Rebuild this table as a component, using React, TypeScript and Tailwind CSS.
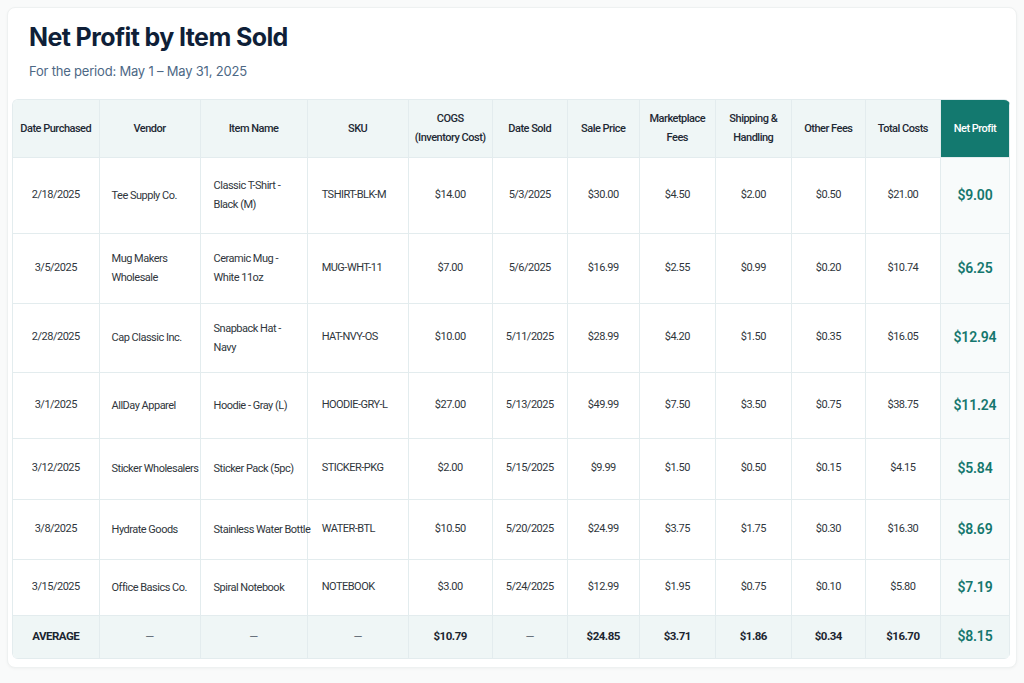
import React from 'react';

interface Sale {
    purchased: string;
    vendor: string[];
    item: string[];
    sku: string;
    cogs: string;
    sold: string;
    price: string;
    market: string;
    shipping: string;
    other: string;
    total: string;
    profit: string;
    h: string;
}

const rows: Sale[] = [
    { purchased: '2/18/2025', vendor: ['Tee Supply Co.'], item: ['Classic T-Shirt -', 'Black (M)'], sku: 'TSHIRT-BLK-M', cogs: '$14.00', sold: '5/3/2025', price: '$30.00', market: '$4.50', shipping: '$2.00', other: '$0.50', total: '$21.00', profit: '$9.00', h: 'h-[76px]' },
    { purchased: '3/5/2025', vendor: ['Mug Makers', 'Wholesale'], item: ['Ceramic Mug -', 'White 11oz'], sku: 'MUG-WHT-11', cogs: '$7.00', sold: '5/6/2025', price: '$16.99', market: '$2.55', shipping: '$0.99', other: '$0.20', total: '$10.74', profit: '$6.25', h: 'h-[70px]' },
    { purchased: '2/28/2025', vendor: ['Cap Classic Inc.'], item: ['Snapback Hat -', 'Navy'], sku: 'HAT-NVY-OS', cogs: '$10.00', sold: '5/11/2025', price: '$28.99', market: '$4.20', shipping: '$1.50', other: '$0.35', total: '$16.05', profit: '$12.94', h: 'h-[69px]' },
    { purchased: '3/1/2025', vendor: ['AllDay Apparel'], item: ['Hoodie - Gray (L)'], sku: 'HOODIE-GRY-L', cogs: '$27.00', sold: '5/13/2025', price: '$49.99', market: '$7.50', shipping: '$3.50', other: '$0.75', total: '$38.75', profit: '$11.24', h: 'h-[66px]' },
    { purchased: '3/12/2025', vendor: ['Sticker Wholesalers'], item: ['Sticker Pack (5pc)'], sku: 'STICKER-PKG', cogs: '$2.00', sold: '5/15/2025', price: '$9.99', market: '$1.50', shipping: '$0.50', other: '$0.15', total: '$4.15', profit: '$5.84', h: 'h-[61px]' },
    { purchased: '3/8/2025', vendor: ['Hydrate Goods'], item: ['Stainless Water Bottle'], sku: 'WATER-BTL', cogs: '$10.50', sold: '5/20/2025', price: '$24.99', market: '$3.75', shipping: '$1.75', other: '$0.30', total: '$16.30', profit: '$8.69', h: 'h-[60px]' },
    { purchased: '3/15/2025', vendor: ['Office Basics Co.'], item: ['Spiral Notebook'], sku: 'NOTEBOOK', cogs: '$3.00', sold: '5/24/2025', price: '$12.99', market: '$1.95', shipping: '$0.75', other: '$0.10', total: '$5.80', profit: '$7.19', h: 'h-[56px]' },
];

const headers: { label: string[]; w: string }[] = [
    { label: ['Date Purchased'], w: 'w-[86px]' },
    { label: ['Vendor'], w: 'w-[101px]' },
    { label: ['Item Name'], w: 'w-[107px]' },
    { label: ['SKU'], w: 'w-[101px]' },
    { label: ['COGS', '(Inventory Cost)'], w: 'w-[84px]' },
    { label: ['Date Sold'], w: 'w-[75px]' },
    { label: ['Sale Price'], w: 'w-[72px]' },
    { label: ['Marketplace', 'Fees'], w: 'w-[76px]' },
    { label: ['Shipping &', 'Handling'], w: 'w-[76px]' },
    { label: ['Other Fees'], w: 'w-[74px]' },
    { label: ['Total Costs'], w: 'w-[75px]' },
    { label: ['Net Profit'], w: 'w-[69px]' },
];

const Lines = ({ lines }: { lines: string[] }) => (
    <>
        {lines.map((l, i) => (
            <div key={i}>{l}</div>
        ))}
    </>
);

const cell = 'border-r border-b border-[#e3ecee] align-middle';
const dash = `${cell} text-center font-normal text-[#5b6570]`;

export default function App() {
    return (
        <div className="min-h-screen bg-[#f9fafa] p-[7px] font-['Roboto',sans-serif]">
            <div className="w-[1010px] h-[661px] bg-white rounded-lg border border-[#eef1f1] shadow-[0_1px_3px_rgba(0,0,0,0.04)] pt-[13px] px-[4px]">
                {/* Title */}
                <div className="pl-[17px]">
                    <h1 className="font-['Inter',sans-serif] text-[25px] leading-[32px] font-bold tracking-[-0.6px] text-[#0f1f38]">
                        Net Profit by Item Sold
                    </h1>
                    <p className="mt-[8px] font-['Inter',sans-serif] text-[13px] leading-[20px] tracking-[-0.2px] text-[#4d6885]">
                        For the period: May 1 – May 31, 2025
                    </p>
                </div>

                {/* Table */}
                <div className="mt-[18px] w-[998px] rounded-md border-l border-t border-[#e3ecee] overflow-hidden">
                    <table className="w-full table-fixed border-collapse text-[11px] tracking-[-0.5px] text-[#30363c]">
                        <colgroup>
                            {headers.map((h, i) => (
                                <col key={i} className={h.w} />
                            ))}
                        </colgroup>
                        <thead>
                            <tr className="h-[57px]">
                                {headers.map((h, i) => (
                                    <th
                                        key={i}
                                        className={`${cell} text-center font-medium leading-[19px] ${i === headers.length - 1
                                            ? 'bg-[#13796f] text-white border-[#13796f]'
                                            : 'bg-[#eff6f6] text-[#1f2a35]'
                                            }`}
                                    >
                                        <Lines lines={h.label} />
                                    </th>
                                ))}
                            </tr>
                        </thead>
                        <tbody>
                            {rows.map((r) => (
                                <tr key={r.sku} className={r.h}>
                                    <td className={`${cell} text-center`}>{r.purchased}</td>
                                    <td className={`${cell} pl-[12px] leading-[19px] whitespace-nowrap`}>
                                        <Lines lines={r.vendor} />
                                    </td>
                                    <td className={`${cell} pl-[13px] leading-[19px] whitespace-nowrap`}>
                                        <Lines lines={r.item} />
                                    </td>
                                    <td className={`${cell} pl-[14px]`}>{r.sku}</td>
                                    <td className={`${cell} text-center`}>{r.cogs}</td>
                                    <td className={`${cell} text-center`}>{r.sold}</td>
                                    <td className={`${cell} text-center`}>{r.price}</td>
                                    <td className={`${cell} text-center`}>{r.market}</td>
                                    <td className={`${cell} text-center`}>{r.shipping}</td>
                                    <td className={`${cell} text-center`}>{r.other}</td>
                                    <td className={`${cell} text-center`}>{r.total}</td>
                                    <td className={`${cell} text-center bg-[#f8fbfb] text-[14px] font-semibold tracking-[-0.2px] text-[#15776e]`}>
                                        {r.profit}
                                    </td>
                                </tr>
                            ))}
                            <tr className="h-[43px] bg-[#eff6f6] font-bold text-[11.5px] text-[#1b2530]">
                                <td className={`${cell} text-center`}>AVERAGE</td>
                                <td className={dash}>—</td>
                                <td className={dash}>—</td>
                                <td className={dash}>—</td>
                                <td className={`${cell} text-center`}>$10.79</td>
                                <td className={dash}>—</td>
                                <td className={`${cell} text-center`}>$24.85</td>
                                <td className={`${cell} text-center`}>$3.71</td>
                                <td className={`${cell} text-center`}>$1.86</td>
                                <td className={`${cell} text-center`}>$0.34</td>
                                <td className={`${cell} text-center`}>$16.70</td>
                                <td className={`${cell} text-center text-[14px] font-semibold tracking-[-0.2px] text-[#15776e]`}>$8.15</td>
                            </tr>
                        </tbody>
                    </table>
                </div>
            </div>
        </div>
    );
}
